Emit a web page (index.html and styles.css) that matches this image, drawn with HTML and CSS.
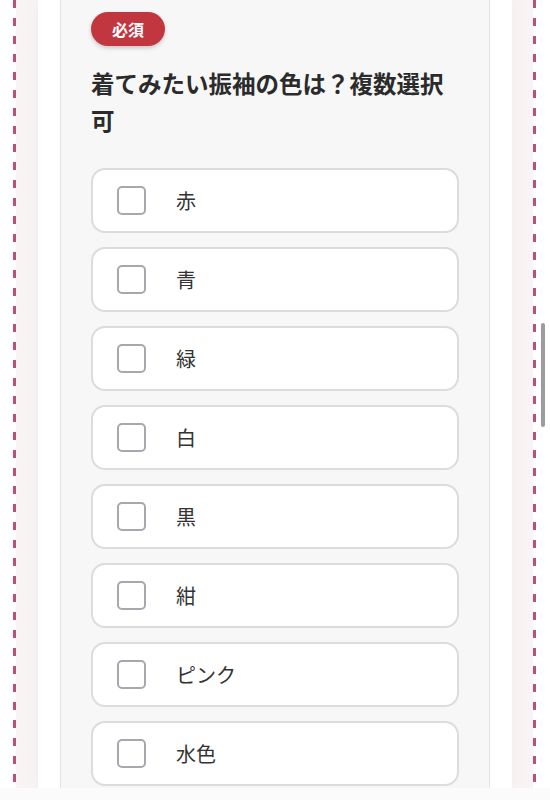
FILE: index.html
```html
<!DOCTYPE html>
<html lang="ja">
<head>
    <meta charset="UTF-8">
    <meta name="viewport" content="width=device-width, initial-scale=1.0">
    <title>アンケート - 振袖の色</title>
    <link rel="stylesheet" href="styles.css">
</head>
<body>

    <div class="frame">
        <div class="sheet">
            <div class="card">
                <span class="badge">必須</span>
                <h2 class="question">着てみたい振袖の色は？複数選択可</h2>

                <div class="options">
                    <label class="option"><span class="box"></span><span class="label">赤</span></label>
                    <label class="option"><span class="box"></span><span class="label">青</span></label>
                    <label class="option"><span class="box"></span><span class="label">緑</span></label>
                    <label class="option"><span class="box"></span><span class="label">白</span></label>
                    <label class="option"><span class="box"></span><span class="label">黒</span></label>
                    <label class="option"><span class="box"></span><span class="label">紺</span></label>
                    <label class="option"><span class="box"></span><span class="label">ピンク</span></label>
                    <label class="option"><span class="box"></span><span class="label">水色</span></label>
                </div>
            </div>
        </div>
    </div>

    <!-- barra de desplazamiento y borde inferior -->
    <div class="scroll-thumb"></div>
    <div class="bottom-strip"></div>

</body>
</html>
```

FILE: styles.css
```css
body {
    margin: 0;
    padding: 0;
    background: #fff;
    font-family: "Noto Sans CJK JP", "Noto Sans", sans-serif;
    color: #333;
    height: 800px;
    overflow: hidden;
}

/* marco con línea discontinua a ambos lados */
.frame {
    margin: 0 14px 0 13px;
    border-left: 3px solid transparent;
    border-right: 3px solid transparent;
    background:
        repeating-linear-gradient(to bottom, #b8527b 0 8px, transparent 8px 18px) left top / 3px 100% no-repeat border-box,
        repeating-linear-gradient(to bottom, #b8527b 0 8px, transparent 8px 18px) right top / 3px 100% no-repeat border-box,
        #f9f4f4 padding-box;
    padding: 0 21px 0 22px;
    height: 788px;
    overflow: hidden;
}

.sheet {
    background: #fff;
    padding: 0 22px;
    height: 100%;
    box-shadow: 0 0 14px rgba(170, 120, 120, 0.08);
}

.card {
    background: #f7f7f7;
    border-left: 1px solid #e3e3e3;
    border-right: 1px solid #e3e3e3;
    padding: 12px 30px 0 30px;
    height: 100%;
}

.badge {
    display: inline-block;
    background: #c1363f;
    color: #fff;
    font-size: 16px;
    font-weight: bold;
    line-height: 34px;
    height: 34px;
    padding: 0 21px;
    border-radius: 17px;
    box-shadow: 0 2px 4px rgba(0, 0, 0, 0.2);
}

.question {
    font-size: 23.5px;
    font-weight: bold;
    line-height: 37px;
    color: #2b2b2b;
    margin: 19px 0 29px 0;
}

.options {
    display: flex;
    flex-direction: column;
    gap: 14px;
}

.option {
    display: flex;
    align-items: center;
    height: 61px;
    background: #fff;
    border: 2px solid #dcdcdc;
    border-radius: 14px;
    padding-left: 24px;
}

.box {
    width: 25px;
    height: 25px;
    border: 2px solid #a5a9ae;
    border-radius: 5px;
    background: #fff;
    flex-shrink: 0;
}

.label {
    font-size: 20px;
    margin-left: 30px;
    color: #333;
}

.scroll-thumb {
    position: fixed;
    left: 541px;
    top: 323px;
    width: 4px;
    height: 104px;
    border-radius: 2px;
    background: #9c9c9c;
}

.bottom-strip {
    position: fixed;
    left: 0;
    bottom: 0;
    width: 100%;
    height: 12px;
    background: #fbfbfb;
}
```
